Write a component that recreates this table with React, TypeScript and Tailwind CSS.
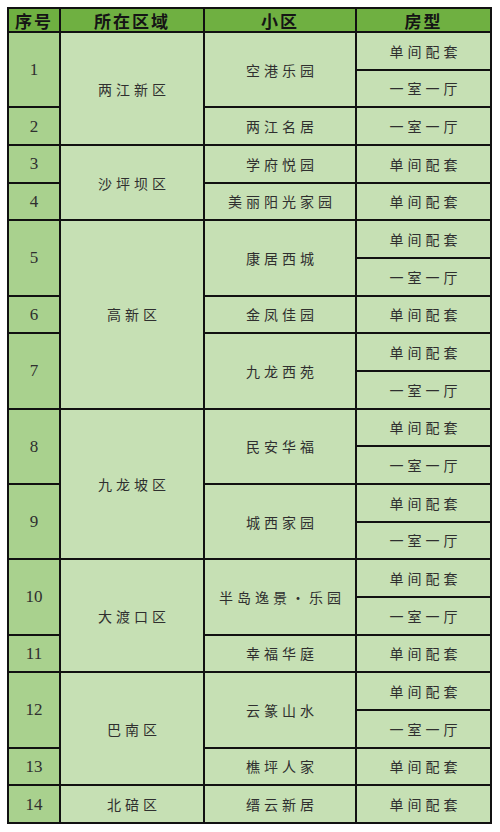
import React from "react";

type Cell = { text: string; col: number; row: number; span: number; kind: "num" | "cn" };

const groups: { num: string; name: string; types: string[] }[] = [
  { num: "1", name: "空港乐园", types: ["单间配套", "一室一厅"] },
  { num: "2", name: "两江名居", types: ["一室一厅"] },
  { num: "3", name: "学府悦园", types: ["单间配套"] },
  { num: "4", name: "美丽阳光家园", types: ["单间配套"] },
  { num: "5", name: "康居西城", types: ["单间配套", "一室一厅"] },
  { num: "6", name: "金凤佳园", types: ["单间配套"] },
  { num: "7", name: "九龙西苑", types: ["单间配套", "一室一厅"] },
  { num: "8", name: "民安华福", types: ["单间配套", "一室一厅"] },
  { num: "9", name: "城西家园", types: ["单间配套", "一室一厅"] },
  { num: "10", name: "半岛逸景·乐园", types: ["单间配套", "一室一厅"] },
  { num: "11", name: "幸福华庭", types: ["单间配套"] },
  { num: "12", name: "云篆山水", types: ["单间配套", "一室一厅"] },
  { num: "13", name: "樵坪人家", types: ["单间配套"] },
  { num: "14", name: "缙云新居", types: ["单间配套"] },
];

const districts: { name: string; span: number }[] = [
  { name: "两江新区", span: 3 },
  { name: "沙坪坝区", span: 2 },
  { name: "高新区", span: 5 },
  { name: "九龙坡区", span: 4 },
  { name: "大渡口区", span: 3 },
  { name: "巴南区", span: 3 },
  { name: "北碚区", span: 1 },
];

function buildCells(): Cell[] {
  const cells: Cell[] = [];
  let r = 2;
  for (const g of groups) {
    cells.push({ text: g.num, col: 1, row: r, span: g.types.length, kind: "num" });
    cells.push({ text: g.name, col: 3, row: r, span: g.types.length, kind: "cn" });
    g.types.forEach((t, i) => {
      cells.push({ text: t, col: 4, row: r + i, span: 1, kind: "cn" });
    });
    r += g.types.length;
  }
  let d = 2;
  for (const ds of districts) {
    cells.push({ text: ds.name, col: 2, row: d, span: ds.span, kind: "cn" });
    d += ds.span;
  }
  return cells;
}

export default function App() {
  const cells = buildCells();
  const headers = ["序号", "所在区域", "小区", "房型"];
  return (
    <div className="w-[500px] h-[832px] bg-white pt-[7px] pl-[7px]">
      <div
        className="grid w-[485px] h-[817px] bg-[#111] p-[2px] gap-[2px] grid-cols-[50px_142px_150px_133px] grid-rows-[22px_repeat(21,1fr)]"
      >
        {headers.map((h, i) => (
          <div
            key={h}
            className="bg-[#6fb041] flex items-center justify-center text-[17px] font-bold text-[#151515] tracking-[2px] leading-none"
            style={{ gridColumn: i + 1, gridRow: 1, fontFamily: '"Noto Sans CJK SC", "Noto Sans", sans-serif' }}
          >
            {h}
          </div>
        ))}
        {cells.map((c, i) => (
          <div
            key={i}
            className={
              (c.col === 1 ? "bg-[#a9d18e] " : "bg-[#c6e0b4] ") +
              "flex items-center justify-center text-[#2f2f2f] leading-none " +
              (c.kind === "num" ? "text-[17px] " : "text-[14px] tracking-[4px] pl-[4px] ")
            }
            style={{
              gridColumn: c.col,
              gridRow: `${c.row} / span ${c.span}`,
              fontFamily:
                c.kind === "num"
                  ? '"Liberation Serif", "Times New Roman", serif'
                  : '"Noto Sans CJK SC", "Noto Sans", sans-serif',
            }}
          >
            {c.text}
          </div>
        ))}
      </div>
    </div>
  );
}
